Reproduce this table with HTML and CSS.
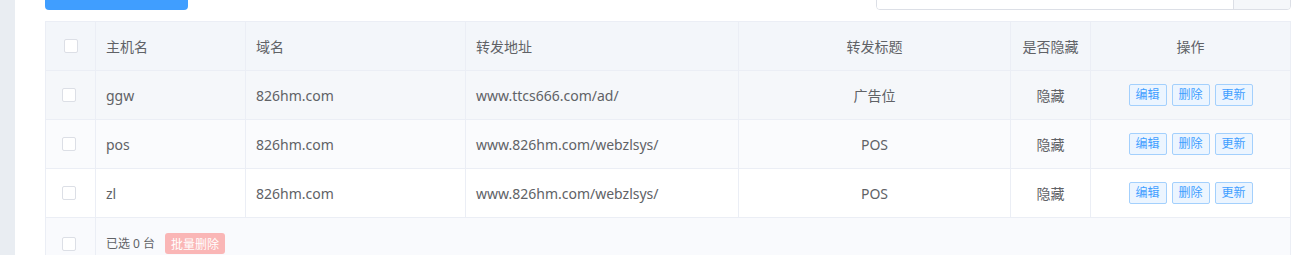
FILE: index.html
```html
<!DOCTYPE html>
<html>
<head>
<meta charset="utf-8">
<link rel="stylesheet" href="styles.css">
</head>
<body>
<div class="layout">
  <aside class="side"></aside>
  <main class="main">
    <div class="toolbar">
      <button class="btn-primary" aria-label="添加主机"></button>
      <div class="search">
        <input class="search-input" type="text">
        <span class="search-append"></span>
      </div>
    </div>
    <div class="table">
      <div class="row head">
        <div class="cell chk"><span class="checkbox"></span></div>
        <div class="cell">主机名</div>
        <div class="cell">域名</div>
        <div class="cell">转发地址</div>
        <div class="cell center">转发标题</div>
        <div class="cell center">是否隐藏</div>
        <div class="cell center">操作</div>
      </div>
      <div class="row r1">
        <div class="cell chk"><span class="checkbox"></span></div>
        <div class="cell">ggw</div>
        <div class="cell">826hm.com</div>
        <div class="cell">www.ttcs666.com/ad/</div>
        <div class="cell center">广告位</div>
        <div class="cell center">隐藏</div>
        <div class="cell center ops"><button class="op">编辑</button><button class="op">删除</button><button class="op">更新</button></div>
      </div>
      <div class="row r2">
        <div class="cell chk"><span class="checkbox"></span></div>
        <div class="cell">pos</div>
        <div class="cell">826hm.com</div>
        <div class="cell">www.826hm.com/webzlsys/</div>
        <div class="cell center">POS</div>
        <div class="cell center">隐藏</div>
        <div class="cell center ops"><button class="op">编辑</button><button class="op">删除</button><button class="op">更新</button></div>
      </div>
      <div class="row r3">
        <div class="cell chk"><span class="checkbox"></span></div>
        <div class="cell">zl</div>
        <div class="cell">826hm.com</div>
        <div class="cell">www.826hm.com/webzlsys/</div>
        <div class="cell center">POS</div>
        <div class="cell center">隐藏</div>
        <div class="cell center ops"><button class="op">编辑</button><button class="op">删除</button><button class="op">更新</button></div>
      </div>
      <div class="row foot">
        <div class="cell chk"><span class="checkbox"></span></div>
        <div class="cell span"><span class="selected">已选 0 台</span><button class="btn-danger">批量删除</button></div>
      </div>
    </div>
  </main>
</div>
</body>
</html>
```
FILE: styles.css
```css
* { box-sizing: border-box; }
html, body { margin: 0; padding: 0; background: #fff; overflow: hidden; }
body { font-family: "Noto Sans", "Noto Sans CJK SC", sans-serif; color: #606266; font-size: 14px; }
.layout { display: flex; height: 255px; overflow: hidden; }
.side { width: 15px; flex: none; background: #e9edf2; }
.main { flex: 1; padding: 0 7px 0 30px; }
.toolbar { display: flex; justify-content: space-between; align-items: flex-end; height: 32px; margin-top: -22px; margin-bottom: 11px; }
.btn-primary { width: 143px; height: 32px; border: none; border-radius: 4px; background: #409eff; color: #fff; font-size: 14px; font-family: inherit; }
.search { display: flex; width: 415px; height: 31px; border: 1px solid #dcdfe6; border-radius: 4px; overflow: hidden; }
.search-input { flex: 1; border: none; outline: none; background: #fff; }
.search-append { width: 57px; background: #f5f7fa; border-left: 1px solid #dcdfe6; }
.table { border-top: 1px solid #ebeef5; border-right: 1px solid #ebeef5; }
.row { display: grid; grid-template-columns: 50px 150px 220px 273px 272px 80px 200px; height: 49px; border-bottom: 1px solid #ebeef5; }
.cell { border-left: 1px solid #ebeef5; display: flex; align-items: center; padding: 0 10px; white-space: nowrap; }
.center { justify-content: center; }
.head { background: #f3f6fa; }
.r1 { background: #f5f7fa; }
.r2 { background: #fafbfd; }
.r3 { background: #fff; }
.foot { background: #f9fafd; grid-template-columns: 50px 1195px; height: 37px; border-bottom: none; }
.chk { padding: 0 0 0 16px; }
.head .chk { padding-left: 18px; }
.checkbox { display: block; width: 14px; height: 14px; border: 1px solid #dcdfe6; border-radius: 2px; background: #fff; }
.ops { gap: 5px; }
.op { width: 38px; height: 22px; padding: 0; border: 1px solid #a3d0fd; border-radius: 2px; background: #ecf5ff; color: #409eff; font-size: 12px; font-family: inherit; line-height: 20px; }
.foot .chk { align-items: flex-start; padding-top: 19px; }
.foot .span { align-items: flex-start; padding: 15px 0 0 10px; }
.selected { font-size: 12px; margin-right: 10px; line-height: 21px; }
.btn-danger { width: 60px; height: 21px; padding: 0; border: none; border-radius: 3px; background: #fab6b6; color: #fff; font-size: 12px; font-family: inherit; }
```
